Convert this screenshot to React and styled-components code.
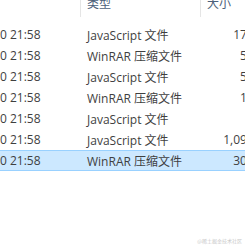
import React from "react";
import styled, { createGlobalStyle } from "styled-components";

const Global = createGlobalStyle`
  html, body { margin: 0; padding: 0; background: #fff; }
  body { width: 245px; height: 245px; overflow: hidden; position: relative; }
  *, *::before, *::after { box-sizing: border-box; }
`;

const FONT = `"Open Sans", "Noto Sans CJK SC", sans-serif`;

const Viewport = styled.div`
  width: 245px;
  height: 245px;
  overflow: hidden;
  position: relative;
  font-family: ${FONT};
  font-size: 12px;
`;

const Table = styled.div`
  margin-left: -57px;
  width: 350px;
  margin-top: -6px;
`;

const Grid = `
  display: grid;
  grid-template-columns: 137px 120px 93px;
`;

const Header = styled.div`
  ${Grid}
  height: 23px;
  margin-bottom: 7px;
  color: #4c607a;
`;

const HeadCell = styled.div`
  padding-left: 6px;
  border-left: ${(p) => (p.$first ? "none" : "1px solid #e5e5e5")};
  line-height: 20px;
  white-space: nowrap;
`;

const Row = styled.div`
  ${Grid}
  height: 21px;
  align-items: center;
  color: #3f3f3f;
  background: ${(p) => (p.$selected ? "#cce8ff" : "transparent")};
  border-top: 1px solid ${(p) => (p.$selected ? "#99d1ff" : "transparent")};
  border-bottom: 1px solid ${(p) => (p.$selected ? "#99d1ff" : "transparent")};
`;

const Cell = styled.div`
  white-space: nowrap;
  overflow: hidden;
  padding-left: 7px;
  text-align: ${(p) => (p.$right ? "right" : "left")};
  padding-right: ${(p) => (p.$right ? "21px" : "0")};
`;

const Watermark = styled.div`
  position: absolute;
  right: 3px;
  bottom: 1px;
  font-size: 5px;
  color: #c8c8c8;
  font-family: "Noto Sans CJK SC", sans-serif;
`;

const rows = [
  { date: "2020/7/10 21:58", type: "JavaScript 文件", size: "175 KB" },
  { date: "2020/7/10 21:58", type: "WinRAR 压缩文件", size: "52 KB" },
  { date: "2020/7/10 21:58", type: "JavaScript 文件", size: "56 KB" },
  { date: "2020/7/10 21:58", type: "WinRAR 压缩文件", size: "13 KB" },
  { date: "2020/7/10 21:58", type: "JavaScript 文件", size: "8 KB" },
  { date: "2020/7/10 21:58", type: "JavaScript 文件", size: "1,094 KB" },
  { date: "2020/7/10 21:58", type: "WinRAR 压缩文件", size: "302 KB", selected: true },
];

export default function App() {
  return (
    <>
      <Global />
      <Viewport>
        <Table>
          <Header>
            <HeadCell $first>修改日期</HeadCell>
            <HeadCell>类型</HeadCell>
            <HeadCell>大小</HeadCell>
          </Header>
          {rows.map((r, i) => (
            <Row key={i} $selected={r.selected}>
              <Cell>{r.date}</Cell>
              <Cell>{r.type}</Cell>
              <Cell $right>{r.size}</Cell>
            </Row>
          ))}
        </Table>
        <Watermark>@稀土掘金技术社区</Watermark>
      </Viewport>
    </>
  );
}
